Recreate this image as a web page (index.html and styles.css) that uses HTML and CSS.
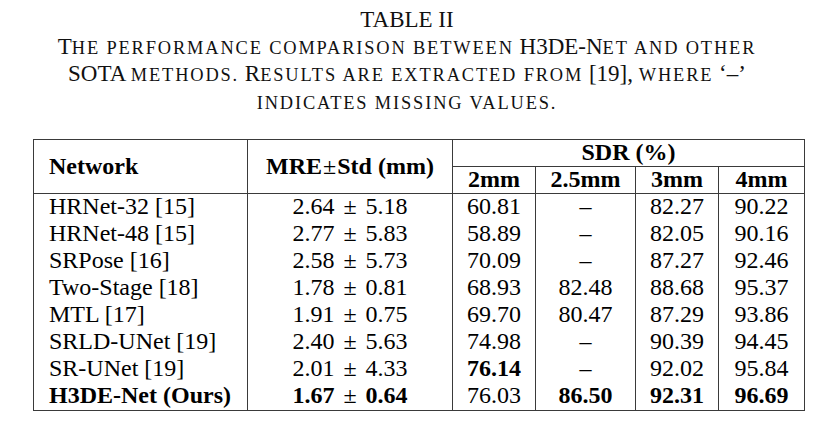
FILE: index.html
```html
<!DOCTYPE html>
<html lang="en">
<head>
    <meta charset="UTF-8">
    <meta name="viewport" content="width=device-width, initial-scale=1.0">
    <title>Table II</title>
    <link rel="stylesheet" href="styles.css">
</head>
<body>
    <div class="page">
        <!-- Caption -->
        <div class="caption">
            <div class="caption-title">TABLE II</div>
            <div class="caption-line">T<span class="sc">he performance comparison between</span> H3DE-N<span class="sc">et and other</span></div>
            <div class="caption-line">SOTA <span class="sc">methods.</span> R<span class="sc">esults are extracted from</span> [19], <span class="sc">where</span> &lsquo;&ndash;&rsquo;</div>
            <div class="caption-line"><span class="sc">indicates missing values.</span></div>
        </div>

        <!-- Results Table -->
        <table class="results">
            <colgroup>
                <col class="col-net">
                <col class="col-mre">
                <col class="col-2">
                <col class="col-25">
                <col class="col-3">
                <col class="col-4">
            </colgroup>
            <thead>
                <tr>
                    <th rowspan="2" class="left">Network</th>
                    <th rowspan="2">MRE<span class="pm">&plusmn;</span>Std (mm)</th>
                    <th colspan="4">SDR (%)</th>
                </tr>
                <tr>
                    <th>2mm</th>
                    <th>2.5mm</th>
                    <th>3mm</th>
                    <th>4mm</th>
                </tr>
            </thead>
            <tbody>
                <tr>
                    <td class="left">HRNet-32 [15]</td>
                    <td>2.64 <span class="pm">&plusmn;</span> 5.18</td>
                    <td>60.81</td>
                    <td>&ndash;</td>
                    <td>82.27</td>
                    <td>90.22</td>
                </tr>
                <tr>
                    <td class="left">HRNet-48 [15]</td>
                    <td>2.77 <span class="pm">&plusmn;</span> 5.83</td>
                    <td>58.89</td>
                    <td>&ndash;</td>
                    <td>82.05</td>
                    <td>90.16</td>
                </tr>
                <tr>
                    <td class="left">SRPose [16]</td>
                    <td>2.58 <span class="pm">&plusmn;</span> 5.73</td>
                    <td>70.09</td>
                    <td>&ndash;</td>
                    <td>87.27</td>
                    <td>92.46</td>
                </tr>
                <tr>
                    <td class="left">Two-Stage [18]</td>
                    <td>1.78 <span class="pm">&plusmn;</span> 0.81</td>
                    <td>68.93</td>
                    <td>82.48</td>
                    <td>88.68</td>
                    <td>95.37</td>
                </tr>
                <tr>
                    <td class="left">MTL [17]</td>
                    <td>1.91 <span class="pm">&plusmn;</span> 0.75</td>
                    <td>69.70</td>
                    <td>80.47</td>
                    <td>87.29</td>
                    <td>93.86</td>
                </tr>
                <tr>
                    <td class="left">SRLD-UNet [19]</td>
                    <td>2.40 <span class="pm">&plusmn;</span> 5.63</td>
                    <td>74.98</td>
                    <td>&ndash;</td>
                    <td>90.39</td>
                    <td>94.45</td>
                </tr>
                <tr>
                    <td class="left">SR-UNet [19]</td>
                    <td>2.01 <span class="pm">&plusmn;</span> 4.33</td>
                    <td class="best">76.14</td>
                    <td>&ndash;</td>
                    <td>92.02</td>
                    <td>95.84</td>
                </tr>
                <tr>
                    <td class="left best">H3DE-Net (Ours)</td>
                    <td class="best">1.67 <span class="pm">&plusmn;</span> 0.64</td>
                    <td>76.03</td>
                    <td class="best">86.50</td>
                    <td class="best">92.31</td>
                    <td class="best">96.69</td>
                </tr>
            </tbody>
        </table>
    </div>
</body>
</html>
```

FILE: styles.css
```css
/* General Styles */
* {
    box-sizing: border-box;
}

html, body {
    margin: 0;
    background-color: #fff;
    color: #111;
    font-family: "Liberation Serif", "Times New Roman", serif;
}

.page {
    width: 814px;
    height: 441px;
    padding-top: 7px;
}

/* Caption */
.caption {
    text-align: center;
    font-size: 23px;
    line-height: 26.7px;
}

.sc {
    text-transform: uppercase;
    font-size: 0.8em;
    letter-spacing: 1.85px;
}

/* Table */
.results {
    margin: 22px 0 0 33px;
    width: 771px;
    table-layout: fixed;
    border-collapse: collapse;
    font-size: 24px;
    color: #000;
}

.col-net { width: 214px; }
.col-mre { width: 205px; }
.col-2 { width: 83px; }
.col-25 { width: 100px; }
.col-3 { width: 83px; }
.col-4 { width: 86px; }

.results th,
.results td {
    border-left: 1px solid #3a3a3a;
    border-right: 1px solid #3a3a3a;
    padding: 0 0 3px;
    height: 27px;
    line-height: 24px;
    text-align: center;
    white-space: nowrap;
}

.results th {
    font-weight: bold;
    border: 1px solid #3a3a3a;
    padding-bottom: 1px;
}

.results tbody tr:last-child td {
    border-bottom: 1px solid #3a3a3a;
}

.results .left {
    text-align: left;
    padding-left: 15px;
}

.best {
    font-weight: bold;
}

/* plus-minus sign stays light, like a math symbol */
.pm {
    font-weight: normal;
    margin: 0 3px;
}

th .pm {
    margin: 0 1px;
}
```
